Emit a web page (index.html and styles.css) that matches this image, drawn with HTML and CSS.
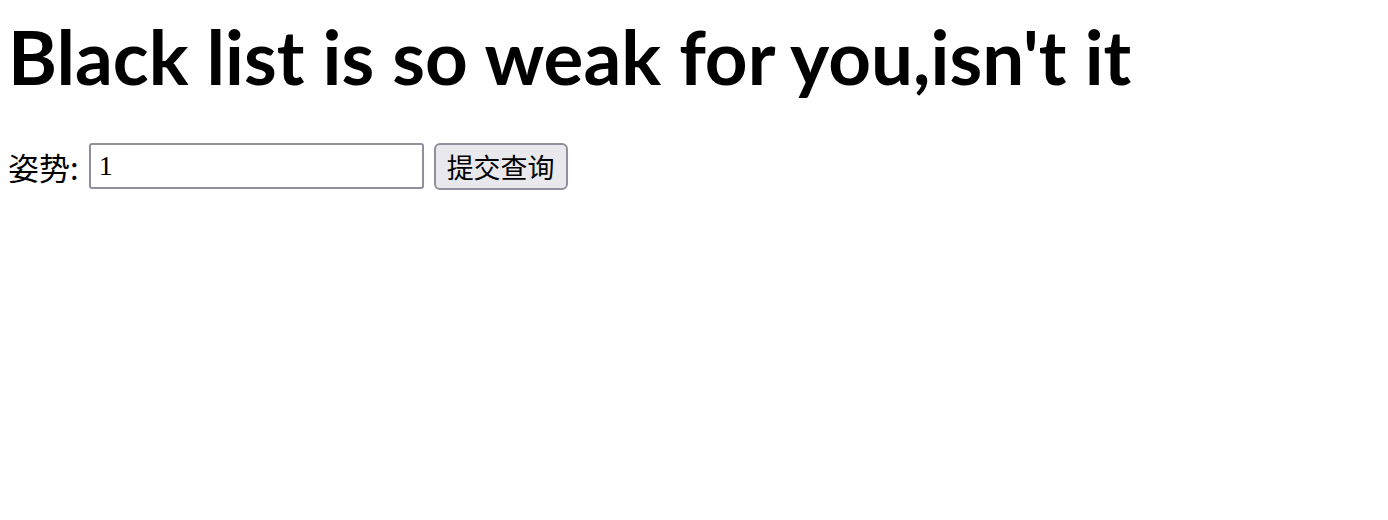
FILE: index.html
```html
<!DOCTYPE html>
<html>
<head>
<meta charset="utf-8">
<title>Black list</title>
<link rel="stylesheet" href="styles.css">
</head>
<body>
<h1 class="title">Black list is so weak for you,isn't it</h1>
<form class="query">
  <label class="label" for="inject">姿势:</label>
  <input class="field" id="inject" type="text" value="1">
  <button class="submit" type="submit">提交查询</button>
</form>
</body>
</html>
```
FILE: styles.css
```css
html, body {
  margin: 0;
  background: #fff;
}
body {
  padding: 0 8px;
  font-family: "Noto Sans CJK SC", sans-serif;
  color: #000;
}
.title {
  font-family: "Lato", "Noto Sans CJK SC", sans-serif;
  font-weight: 700;
  font-size: 74.5px;
  line-height: 1;
  margin: 19px 0 0 0;
}
.query {
  display: flex;
  align-items: center;
  margin-top: 49px;
}
.label {
  font-size: 31px;
  line-height: 47px;
  margin-right: 10px;
}
.field {
  box-sizing: border-box;
  width: 335px;
  height: 46px;
  border: 2px solid #8f8f9d;
  border-radius: 3px;
  padding: 2px 8px;
  font-family: "Liberation Serif", serif;
  font-size: 28px;
  margin: 0 10px 0 0;
}
.submit {
  box-sizing: border-box;
  height: 47px;
  padding: 0 11px;
  border: 2px solid #8f8f9d;
  border-radius: 6px;
  background: #e9e9ed;
  font-family: "Noto Sans CJK SC", sans-serif;
  font-size: 27px;
  color: #000;
}
```
